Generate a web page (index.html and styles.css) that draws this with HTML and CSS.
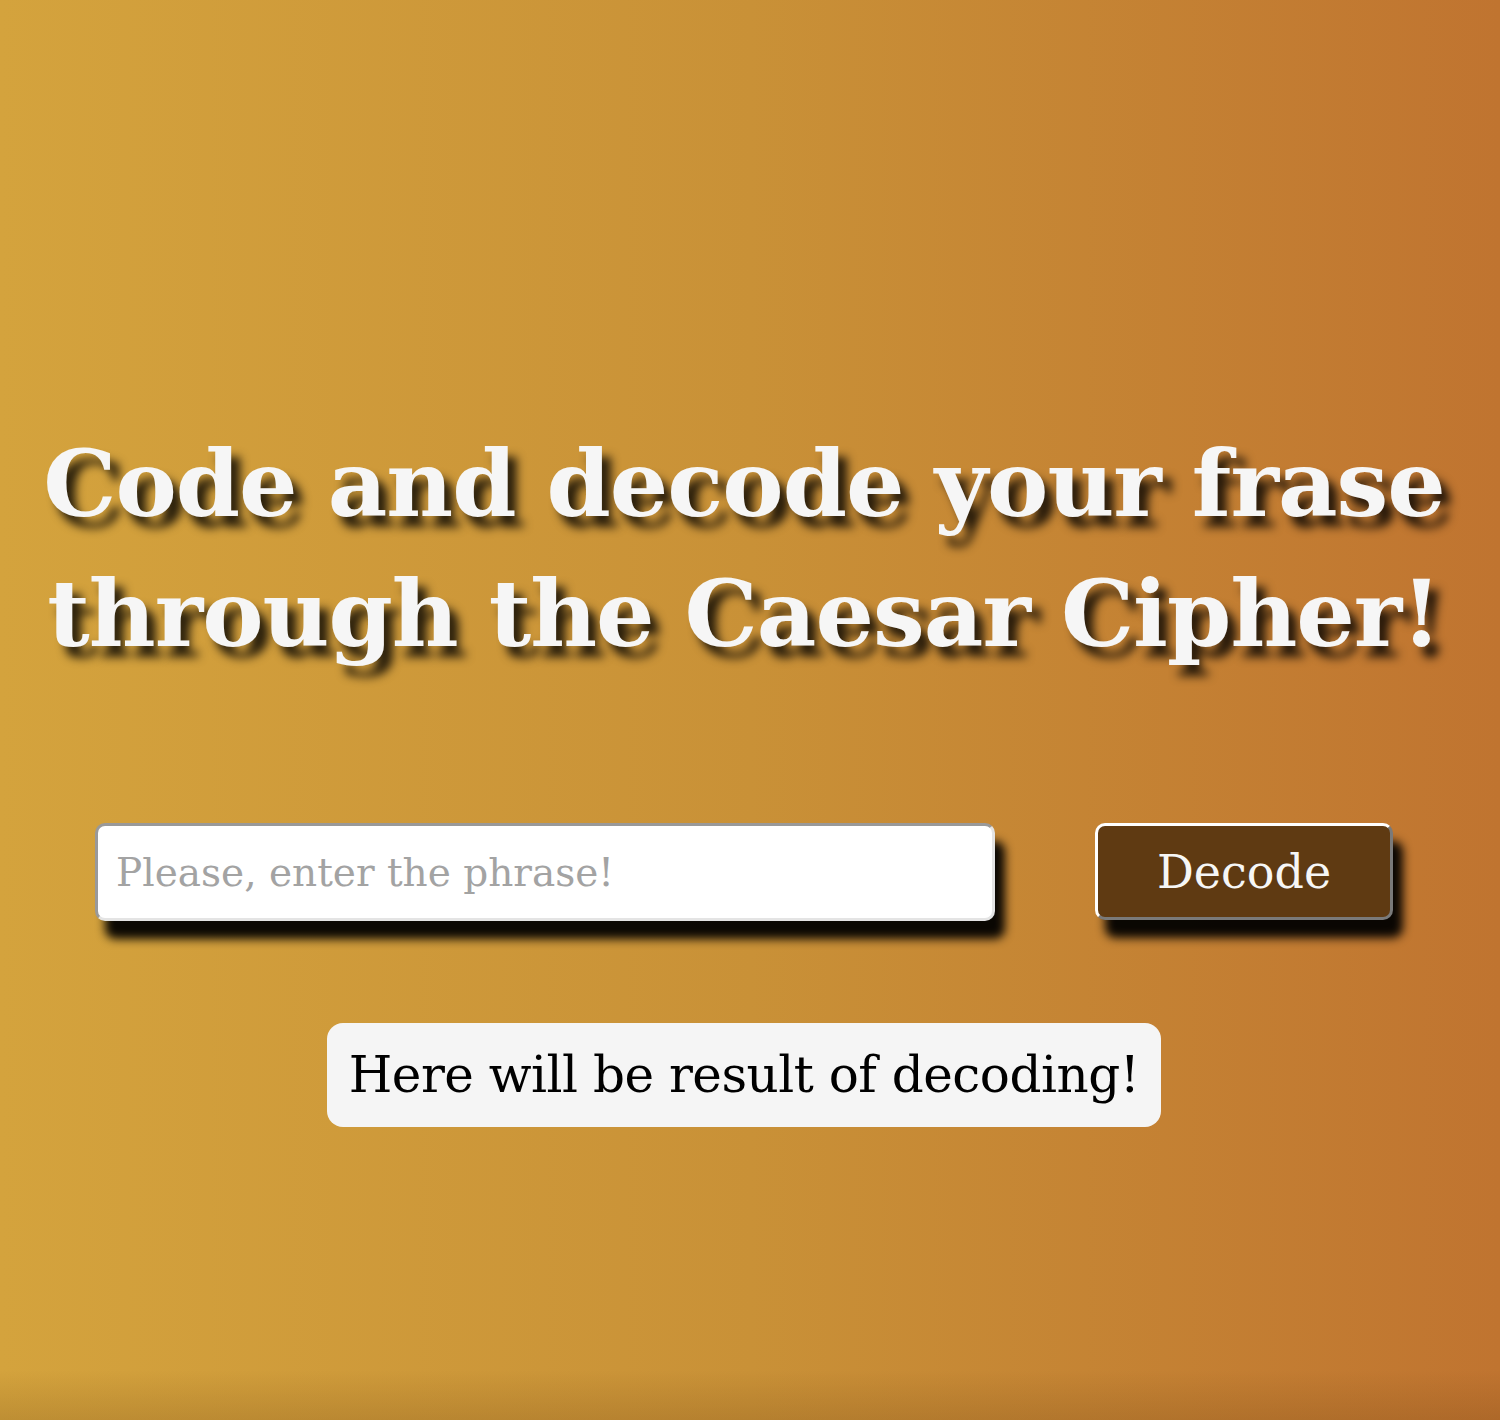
FILE: index.html
```html
<!DOCTYPE html>
<html lang="en">
<head>
<meta charset="utf-8">
<title>Caesar Cipher</title>
<link rel="stylesheet" href="styles.css">
</head>
<body>
<main class="page">
  <h1 class="title">Code and decode your frase<br>through the Caesar Cipher!</h1>
  <form class="controls" onsubmit="return false">
    <input class="phrase" type="text" placeholder="Please, enter the phrase!">
    <button class="decode" type="button">Decode</button>
  </form>
  <div class="result">Here will be result of decoding!</div>
</main>
</body>
</html>
```
FILE: styles.css
```css
html, body {
  margin: 0;
  padding: 0;
}
body {
  min-height: 1420px;
  background:
    linear-gradient(to bottom, rgba(90, 50, 10, 0) 1370px, rgba(90, 50, 10, 0.18) 1420px),
    linear-gradient(to right, #d4a33d 0%, #c99137 50%, #c07430 100%);
  font-family: "DejaVu Serif", "Liberation Serif", serif;
}
.page {
  display: flex;
  flex-direction: column;
  align-items: center;
  padding-top: 419px;
  padding-right: 12px;
}
.title {
  margin: 0;
  font-size: 92px;
  line-height: 130px;
  font-weight: bold;
  color: #f6f6f6;
  text-align: center;
  text-shadow: 9px 11px 10px rgba(0, 0, 0, 0.8);
  letter-spacing: -1px;
}
.controls {
  margin-top: 144px;
  display: flex;
  gap: 100px;
}
.phrase {
  box-sizing: border-box;
  width: 900px;
  height: 98px;
  padding: 0 18px;
  border: 3px solid;
  border-color: #999 #e4e4e4 #e4e4e4 #999;
  border-radius: 10px;
  background: #fff;
  font-family: inherit;
  font-size: 39px;
  color: #333;
  box-shadow: 10px 18px 10px rgba(0, 0, 0, 0.95);
  outline: none;
}
.phrase::placeholder {
  color: #a3a3a3;
}
.decode {
  box-sizing: border-box;
  width: 298px;
  height: 97px;
  border: 3px solid;
  border-color: #fff #7a7a7a #7a7a7a #fff;
  border-radius: 10px;
  background: #5f3a12;
  color: #f6f6f6;
  font-family: inherit;
  font-size: 46px;
  box-shadow: 10px 18px 10px rgba(0, 0, 0, 0.95);
  cursor: pointer;
}
.result {
  margin-top: 102px;
  box-sizing: border-box;
  height: 104px;
  padding: 0 22px;
  display: flex;
  align-items: center;
  background: #f5f5f5;
  border-radius: 16px;
  color: #000;
  font-size: 50px;
  letter-spacing: -0.5px;
}
```
